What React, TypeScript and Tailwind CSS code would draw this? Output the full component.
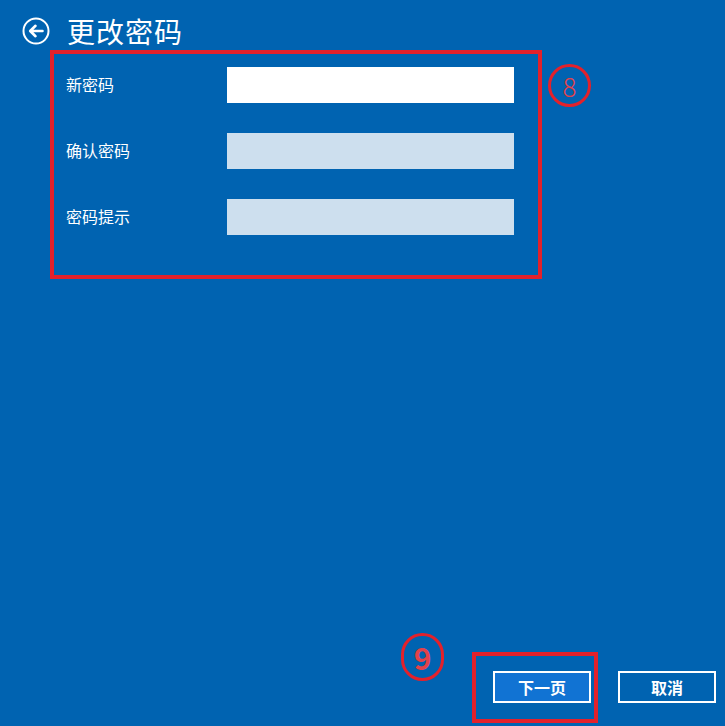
import React from "react";

const font = { fontFamily: '"Noto Sans CJK SC", "Noto Sans", sans-serif' };

function BackIcon() {
  return (
    <svg width="28" height="28" viewBox="0 0 28 28" fill="none" stroke="white" strokeWidth="2">
      <circle cx="14" cy="14" r="12.5" />
      <path d="M20.5 14H8.5M13.5 8.8L8.2 14l5.3 5.2" strokeWidth="2.6" strokeLinecap="round" strokeLinejoin="round" />
    </svg>
  );
}

const fields = [
  { label: "新密码", active: true },
  { label: "确认密码", active: false },
  { label: "密码提示", active: false },
];

export default function App() {
  return (
    <div
      className="relative flex h-[726px] w-[725px] flex-col overflow-hidden bg-[#0063b1] text-white"
      style={font}
    >
      {/* header */}
      <div className="flex items-center pl-[22px] pt-[15px]">
        <BackIcon />
        <h1 className="ml-[17px] text-[28px] leading-[32px] font-normal tracking-[1px]">更改密码</h1>
      </div>

      {/* form */}
      <div className="mt-[20px] flex flex-col gap-[30px] pl-[66px]">
        {fields.map((f) => (
          <div key={f.label} className="flex h-[36px] items-center">
            <span className="-mt-[2px] w-[161px] text-[16px] leading-none">{f.label}</span>
            <div className={`h-[36px] w-[287px] ${f.active ? "bg-white" : "bg-[#cddfee]"}`} />
          </div>
        ))}
      </div>

      <div className="flex-1" />

      {/* buttons */}
      <div className="flex justify-end gap-[27px] pr-[9px] pb-[23px]">
        <button className="h-[32px] w-[98px] border-2 border-white bg-[#1173d3] text-[16px] leading-none font-bold">
          下一页
        </button>
        <button className="h-[32px] w-[98px] border-2 border-white bg-[#0063b1] text-[16px] leading-none font-bold">
          取消
        </button>
      </div>

      {/* annotations */}
      <div className="absolute top-[50px] left-[50px] h-[229px] w-[492px] border-4 border-[#e3212b]" />
      <div className="absolute top-[64px] left-[548px] flex h-[43px] w-[43px] items-center justify-center rounded-full border-[3px] border-[#e3212b] text-[26px] leading-none font-light text-[#e3424a]">
        8
      </div>
      <div className="absolute top-[633px] left-[401px] flex h-[48px] w-[43px] items-center justify-center rounded-full border-[3px] border-[#e3212b] text-[30px] leading-none font-semibold text-[#e3424a]">
        9
      </div>
      <div className="absolute top-[652px] left-[472px] h-[71px] w-[126px] border-4 border-[#e3212b]" />
    </div>
  );
}
